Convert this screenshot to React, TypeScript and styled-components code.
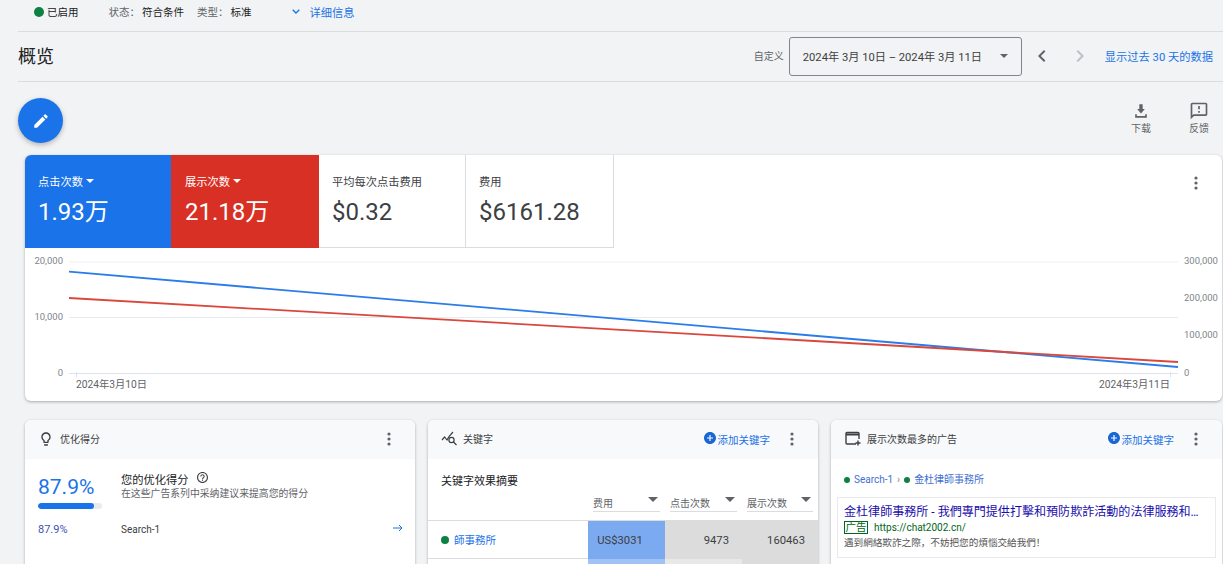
import React, { FC } from "react";
import styled, { createGlobalStyle } from "styled-components";

const GlobalStyle = createGlobalStyle`
  html, body {
    margin: 0;
    padding: 0;
    height: 564px;
    overflow: hidden;
    background: #f1f3f4;
    font-family: Roboto, "Noto Sans CJK SC", sans-serif;
    color: #3c4043;
  }
  * { box-sizing: border-box; }
`;

const Page = styled.div`
  width: 1223px;
  height: 564px;
  overflow: hidden;
`;

const StatusBar = styled.div`
  display: flex;
  align-items: center;
  height: 32px;
  margin-left: 18px;
  padding: 0 0 8px 16px;
  border-bottom: 1px solid #dadce0;
  font-size: 10.5px;
`;

const Dot = styled.span<{ $size?: number }>`
  flex: none;
  width: ${(p) => p.$size ?? 10}px;
  height: ${(p) => p.$size ?? 10}px;
  border-radius: 50%;
  background: #0d8043;
`;

const StatusItem = styled.span<{ $gap: number }>`
  margin-left: ${(p) => p.$gap}px;
  color: #202124;
  white-space: nowrap;
`;

const StatusLabel = styled.span`
  color: #5f6368;
  margin-right: 2px;
`;

const DetailsLink = styled.a`
  display: flex;
  align-items: center;
  gap: 10px;
  margin-left: 40px;
  color: #1a73e8;
  font-size: 11.25px;
`;

const OverviewRow = styled.div`
  display: flex;
  align-items: center;
  height: 50px;
  margin-left: 18px;
  border-bottom: 1px solid #dadce0;
`;

const Title = styled.h1`
  margin: -4px auto 0 0;
  font-size: 18px;
  font-weight: 400;
  color: #202124;
`;

const CustomLabel = styled.span`
  font-size: 10px;
  color: #5f6368;
  margin-right: 5px;
  margin-top: -3px;
`;

const DateBox = styled.div`
  display: flex;
  align-items: center;
  justify-content: space-between;
  width: 233px;
  height: 39px;
  padding: 0 13px 0 13px;
  border: 1px solid #80868b;
  border-radius: 3px;
  font-size: 11.2px;
  color: #3c4043;
  margin-top: -1px;
`;

const Caret = styled.span<{ $color?: string; $w?: number }>`
  display: inline-block;
  flex: none;
  width: 0;
  height: 0;
  border-left: ${(p) => p.$w ?? 4}px solid transparent;
  border-right: ${(p) => p.$w ?? 4}px solid transparent;
  border-top: ${(p) => p.$w ?? 4}px solid ${(p) => p.$color ?? "#5f6368"};
`;

const NavArrows = styled.div`
  display: flex;
  gap: 14px;
  margin: -1px 0 0 8px;
`;

const Last30 = styled.a`
  margin: -1px 10px 0 13px;
  color: #1a73e8;
  font-size: 11.25px;
`;

const Toolbar = styled.div`
  display: flex;
  align-items: flex-start;
  justify-content: space-between;
  height: 73px;
  padding: 16px 0 0 18px;
`;

const Fab = styled.button`
  display: flex;
  align-items: center;
  justify-content: center;
  width: 45px;
  height: 45px;
  border: 0;
  padding: 0;
  border-radius: 50%;
  background: #1a73e8;
  box-shadow: 0 2px 5px rgba(60, 64, 67, 0.35);
`;

const ToolActions = styled.div`
  display: flex;
  gap: 28px;
  margin: 3px 9px 0 0;
`;

const ToolAction = styled.div`
  display: flex;
  flex-direction: column;
  align-items: center;
  width: 30px;
  gap: 1px;
  font-size: 10px;
  color: #5f6368;
  line-height: 14px;
`;

const OverviewCard = styled.section`
  position: relative;
  height: 246px;
  margin: 0 1px 0 25px;
  background: #fff;
  border-radius: 6px;
  box-shadow: 0 1px 3px rgba(60, 64, 67, 0.4);
  overflow: hidden;
`;

const Tiles = styled.div`
  display: flex;
  height: 93px;
`;

const Tile = styled.div<{ $bg?: string; $w: number; $inset?: number }>`
  width: ${(p) => p.$w}px;
  padding: 18px 0 0 ${(p) => p.$inset ?? 13}px;
  background: ${(p) => p.$bg ?? "#fff"};
  color: ${(p) => (p.$bg ? "#fff" : "#3c4043")};
  border-right: ${(p) => (p.$bg ? "0" : "1px solid #dadce0")};
  border-bottom: ${(p) => (p.$bg ? "0" : "1px solid #dadce0")};
`;

const TileLabel = styled.div`
  display: flex;
  align-items: center;
  gap: 3px;
  height: 15px;
  font-size: 11.25px;
`;

const TileValue = styled.div`
  margin-top: 8px;
  font-size: 24px;
  line-height: 32px;
  white-space: nowrap;
`;

const CardMenu = styled.div`
  position: absolute;
  top: 20px;
  right: 24px;
`;

const Chart = styled.svg`
  display: block;
  width: 1197px;
  height: 153px;
`;

const Widgets = styled.div`
  display: grid;
  grid-template-columns: 390px 390px 391px;
  gap: 13px;
  margin: 19px 1px 0 25px;
`;

const Widget = styled.section`
  height: 200px;
  background: #fff;
  border-radius: 6px 6px 0 0;
  box-shadow: 0 1px 3px rgba(60, 64, 67, 0.4);
  overflow: hidden;
`;

const WidgetHeader = styled.header`
  display: flex;
  align-items: center;
  height: 39px;
  padding: 0 24px 2px 13px;
  background: #f8f9fa;
  font-size: 10px;
  color: #5f6368;
`;

const HeaderTitle = styled.span<{ $gap?: number }>`
  margin: 0 auto 0 ${(p) => p.$gap ?? 6}px;
  color: #3c4043;
`;

const AddLink = styled.a`
  display: flex;
  align-items: center;
  gap: 2px;
  margin: 2px 20px 0 0;
  color: #1a73e8;
  font-size: 10.5px;
`;

const ScoreBody = styled.div`
  display: grid;
  grid-template-columns: 83px 1fr 12px;
  padding: 14px 12px 0 13px;
`;

const ScoreValue = styled.div`
  font-size: 21px;
  line-height: 28px;
  color: #1a73e8;
`;

const ScoreTrack = styled.div`
  width: 64px;
  height: 6px;
  margin-top: 2px;
  border-radius: 3px;
  background: #e8eaed;
  overflow: hidden;
`;

const ScoreFill = styled.div`
  height: 100%;
  border-radius: 3px;
  background: #1a73e8;
`;

const ScoreTitle = styled.div`
  display: flex;
  align-items: center;
  gap: 8px;
  height: 14px;
  margin: 1px 0 -1px;
  font-size: 11.25px;
  line-height: 14px;
  color: #202124;
`;

const HelpIcon = styled.svg`
  margin-top: -7px;
`;

const ScoreHint = styled.div`
  font-size: 9.85px;
  line-height: 13px;
  color: #5f6368;
  white-space: nowrap;
`;

const ScoreRow = styled.div`
  display: grid;
  grid-template-columns: 83px 1fr 12px;
  align-items: center;
  margin-top: 14px;
  padding: 0 12px 0 13px;
  font-size: 10px;
  color: #3c4043;
`;

const ScorePercent = styled.span`
  color: #3f51b5;
  font-size: 11px;
`;

const RowArrow = styled.svg`
  margin: -3px 0 0 2px;
`;

const TableTitle = styled.div`
  padding: 15px 0 0 13px;
  font-size: 11px;
  line-height: 15px;
  color: #202124;
`;

const HeadRow = styled.div`
  display: grid;
  grid-template-columns: 160px 77px 77px 76px;
  height: 32px;
  padding-top: 8px;
  border-bottom: 1px solid #dadce0;
`;

const HeadCell = styled.div`
  display: flex;
  justify-content: space-between;
  align-items: flex-start;
  height: 14px;
  margin-left: 5px;
  margin-right: 5px;
  padding-right: 2px;
  box-sizing: content-box;
  border-bottom: 1px solid #dadce0;
  font-size: 10px;
  line-height: 14px;
  color: #5f6368;
`;

const DataRow = styled.div`
  display: grid;
  grid-template-columns: 160px 77px 77px 76px;
  height: 38px;
  border-bottom: 1px solid #dadce0;
`;

const NameCell = styled.div`
  display: flex;
  align-items: center;
  gap: 5px;
  padding-left: 13px;
  font-size: 10.5px;
  color: #1a73e8;
`;

const MetricCell = styled.div<{ $bg: string; $align?: string }>`
  display: flex;
  align-items: center;
  justify-content: ${(p) => p.$align ?? "flex-end"};
  padding-right: 13px;
  margin-bottom: -1px;
  background: ${(p) => p.$bg};
  font-size: 11.25px;
  color: #3c4043;
`;

const AdCrumbs = styled.div`
  display: flex;
  align-items: center;
  gap: 4px;
  padding: 14px 0 0 13px;
  font-size: 10px;
  line-height: 14px;
  color: #3f6fd1;
`;

const CrumbSep = styled.span`
  color: #80868b;
`;

const AdPreview = styled.div`
  margin: 10px 6px 0 6px;
  height: 61px;
  padding: 6px 6px;
  border: 1px solid #e8eaed;
`;

const AdHeadline = styled.div`
  font-size: 12.05px;
  line-height: 16px;
  color: #1a0dab;
  white-space: nowrap;
`;

const AdUrlRow = styled.div`
  display: flex;
  align-items: center;
  gap: 6px;
  margin-top: 1px;
  font-size: 10px;
  line-height: 12px;
  color: #006621;
`;

const AdBadge = styled.span`
  width: 24px;
  height: 13px;
  border: 1px solid #006621;
  font-size: 10.5px;
  line-height: 11px;
  text-align: center;
`;

const AdText = styled.div`
  margin-top: 2px;
  font-size: 9.6px;
  line-height: 13px;
  color: #545454;
`;

const MoreIcon: FC = () => (
  <svg width="4" height="14" viewBox="0 0 4 14">
    <circle cx="2" cy="2" r="1.6" fill="#5f6368" />
    <circle cx="2" cy="7" r="1.6" fill="#5f6368" />
    <circle cx="2" cy="12" r="1.6" fill="#5f6368" />
  </svg>
);

const AddCircle: FC = () => (
  <svg width="12" height="12" viewBox="2 2 20 20" fill="#1967d2" style={{ marginTop: -3 }}>
    <path d="M12 2C6.48 2 2 6.48 2 12s4.48 10 10 10 10-4.48 10-10S17.52 2 12 2zm5 11h-4v4h-2v-4H7v-2h4V7h2v4h4v2z" />
  </svg>
);

const Chevron: FC<{ flip?: boolean; color: string }> = ({ flip, color }) => (
  <svg width="24" height="24" viewBox="0 0 24 24" fill={color} style={flip ? { transform: "scaleX(-1)" } : undefined}>
    <path d="M15.41 7.41L14 6l-6 6 6 6 1.41-1.41L10.83 12z" />
  </svg>
);

const axisFont = { fontSize: 9.5, fill: "#80868b" };

const OverviewChart: FC = () => (
  <Chart viewBox="25 248 1197 153">
    <line x1="69" x2="1178" y1="262" y2="262" stroke="#eef0f6" />
    <line x1="69" x2="1178" y1="317.5" y2="317.5" stroke="#e8eaf2" />
    <line x1="69" x2="1178" y1="373.5" y2="373.5" stroke="#dfe3ee" />
    <line x1="76.5" x2="76.5" y1="372" y2="377" stroke="#dfe3ee" />
    <line x1="1170.5" x2="1170.5" y1="372" y2="377" stroke="#dfe3ee" />
    <line x1="69" y1="271.7" x2="1178" y2="367" stroke="#2a7de9" strokeWidth="1.8" />
    <line x1="69" y1="298" x2="1178" y2="362" stroke="#d9483d" strokeWidth="1.8" />
    <g {...axisFont} textAnchor="end">
      <text x="63" y="264">20,000</text>
      <text x="63" y="320">10,000</text>
      <text x="63" y="376">0</text>
    </g>
    <g {...axisFont}>
      <text x="1184" y="264">300,000</text>
      <text x="1184" y="301">200,000</text>
      <text x="1184" y="338">100,000</text>
      <text x="1184" y="376">0</text>
    </g>
    <g fontSize="10.25" fill="#5f6368">
      <text x="76" y="388">2024年3月10日</text>
      <text x="1170" y="388" textAnchor="end">2024年3月11日</text>
    </g>
  </Chart>
);

export default function App() {
  return (
    <Page>
      <GlobalStyle />
      <StatusBar>
        <Dot />
        <StatusItem $gap={3}>已启用</StatusItem>
        <StatusItem $gap={30}>
          <StatusLabel>状态：</StatusLabel>符合条件
        </StatusItem>
        <StatusItem $gap={13}>
          <StatusLabel>类型：</StatusLabel>标准
        </StatusItem>
        <DetailsLink>
          <svg width="8" height="5" viewBox="0 0 8 5" fill="none" stroke="#1a73e8" strokeWidth="1.3">
            <path d="M.7.7 4 4l3.3-3.3" />
          </svg>
          详细信息
        </DetailsLink>
      </StatusBar>

      <OverviewRow>
        <Title>概览</Title>
        <CustomLabel>自定义</CustomLabel>
        <DateBox>
          2024年 3月 10日 – 2024年 3月 11日
          <Caret />
        </DateBox>
        <NavArrows>
          <Chevron color="#5f6368" />
          <Chevron flip color="#bdc1c6" />
        </NavArrows>
        <Last30>显示过去 30 天的数据</Last30>
      </OverviewRow>

      <Toolbar>
        <Fab>
          <svg width="18" height="18" viewBox="0 0 24 24" fill="#fff">
            <path d="M3 17.25V21h3.75L17.81 9.94l-3.75-3.75L3 17.25zM20.71 7.04c.39-.39.39-1.02 0-1.41l-2.34-2.34c-.39-.39-1.02-.39-1.41 0l-1.83 1.83 3.75 3.75 1.83-1.83z" />
          </svg>
        </Fab>
        <ToolActions>
          <ToolAction>
            <svg width="20" height="20" viewBox="0 0 24 24" fill="#5f6368">
              <path d="M16.6 9.6H14V4h-4v5.6H7.4L12 15zM5 16v4h14v-4h-2v2H7v-2z" />
            </svg>
            下载
          </ToolAction>
          <ToolAction>
            <svg width="20" height="20" viewBox="0 0 24 24" fill="#5f6368">
              <path d="M20 2H4c-1.1 0-1.99.9-1.99 2L2 22l4-4h14c1.1 0 2-.9 2-2V4c0-1.1-.9-2-2-2zm0 14H5.17L4 17.17V4h16v12zm-9-4h2v2h-2zm0-6h2v4h-2z" />
            </svg>
            反馈
          </ToolAction>
        </ToolActions>
      </Toolbar>

      <OverviewCard>
        <Tiles>
          <Tile $bg="#1a73e8" $w={146}>
            <TileLabel>
              点击次数 <Caret $color="#fff" />
            </TileLabel>
            <TileValue>1.93万</TileValue>
          </Tile>
          <Tile $bg="#d93025" $w={148} $inset={14}>
            <TileLabel>
              展示次数 <Caret $color="#fff" />
            </TileLabel>
            <TileValue>21.18万</TileValue>
          </Tile>
          <Tile $w={147}>
            <TileLabel>平均每次点击费用</TileLabel>
            <TileValue>$0.32</TileValue>
          </Tile>
          <Tile $w={148}>
            <TileLabel>费用</TileLabel>
            <TileValue>$6161.28</TileValue>
          </Tile>
        </Tiles>
        <CardMenu>
          <MoreIcon />
        </CardMenu>
        <OverviewChart />
      </OverviewCard>

      <Widgets>
        <Widget>
          <WidgetHeader>
            <svg width="16" height="16" viewBox="0 0 24 24" fill="#3c4043">
              <path d="M9 21c0 .55.45 1 1 1h4c.55 0 1-.45 1-1v-1H9v1zm3-19C8.14 2 5 5.14 5 9c0 2.38 1.19 4.47 3 5.74V17c0 .55.45 1 1 1h6c.55 0 1-.45 1-1v-2.26c1.81-1.27 3-3.36 3-5.74 0-3.86-3.14-7-7-7zm2.85 11.1l-.85.6V16h-4v-2.3l-.85-.6C7.8 12.16 7 10.63 7 9c0-2.76 2.24-5 5-5s5 2.24 5 5c0 1.63-.8 3.16-2.15 4.1z" />
            </svg>
            <HeaderTitle>优化得分</HeaderTitle>
            <MoreIcon />
          </WidgetHeader>
          <ScoreBody>
            <div>
              <ScoreValue>87.9%</ScoreValue>
              <ScoreTrack>
                <ScoreFill style={{ width: "87.9%" }} />
              </ScoreTrack>
            </div>
            <div>
              <ScoreTitle>
                您的优化得分
                <HelpIcon width="11" height="11" viewBox="2 2 20 20" fill="#3c4043">
                  <path d="M11 18h2v-2h-2v2zm1-16C6.48 2 2 6.48 2 12s4.48 10 10 10 10-4.48 10-10S17.52 2 12 2zm0 18c-4.41 0-8-3.59-8-8s3.59-8 8-8 8 3.59 8 8-3.59 8-8 8zm0-14c-2.21 0-4 1.79-4 4h2c0-1.1.9-2 2-2s2 .9 2 2c0 2-3 1.75-3 5h2c0-2.25 3-2.5 3-5 0-2.21-1.79-4-4-4z" />
                </HelpIcon>
              </ScoreTitle>
              <ScoreHint>在这些广告系列中采纳建议来提高您的得分</ScoreHint>
            </div>
          </ScoreBody>
          <ScoreRow>
            <ScorePercent>87.9%</ScorePercent>
            <span>Search-1</span>
            <RowArrow width="10" height="8" viewBox="0 0 10 8" fill="none" stroke="#1a73e8" strokeWidth="1">
              <path d="M0 4h9M6 1l3 3-3 3" />
            </RowArrow>
          </ScoreRow>
        </Widget>

        <Widget>
          <WidgetHeader>
            <svg width="18" height="15" viewBox="0 0 18 15" fill="none" stroke="#3c4043" strokeWidth="1.2">
              <path d="M1 9l2.6-3 2.4 3 2-3.5L12 1" />
              <circle cx="10.5" cy="9" r="2.6" />
              <path d="M12.5 11l3 3" />
            </svg>
            <HeaderTitle $gap={4}>关键字</HeaderTitle>
            <AddLink>
              <AddCircle />
              添加关键字
            </AddLink>
            <MoreIcon />
          </WidgetHeader>
          <TableTitle>关键字效果摘要</TableTitle>
          <HeadRow>
            <span />
            <HeadCell>
              费用 <Caret $w={5} />
            </HeadCell>
            <HeadCell>
              点击次数 <Caret $w={5} />
            </HeadCell>
            <HeadCell>
              展示次数 <Caret $w={5} />
            </HeadCell>
          </HeadRow>
          <DataRow>
            <NameCell>
              <Dot $size={8} />
              師事務所
            </NameCell>
            <MetricCell $bg="#7baaf0" $align="center">US$3031</MetricCell>
            <MetricCell $bg="#dcdcdc">9473</MetricCell>
            <MetricCell $bg="#dcdcdc">160463</MetricCell>
          </DataRow>
          <DataRow>
            <NameCell />
            <MetricCell $bg="#a0c2f4" />
            <MetricCell $bg="#e8e8e8" />
            <MetricCell $bg="#dcdcdc" />
          </DataRow>
        </Widget>

        <Widget>
          <WidgetHeader>
            <svg width="16" height="15" viewBox="0 0 16 15" fill="none" stroke="#3c4043" strokeWidth="1.4" style={{ marginLeft: 1 }}>
              <path d="M11 13H2a1 1 0 0 1-1-1V2.5a1 1 0 0 1 1-1h11a1 1 0 0 1 1 1V8" />
              <path d="M1 3.5h13" strokeWidth="2" />
              <path d="M13 9.5v5M10.5 12h5" />
            </svg>
            <HeaderTitle>展示次数最多的广告</HeaderTitle>
            <AddLink>
              <AddCircle />
              添加关键字
            </AddLink>
            <MoreIcon />
          </WidgetHeader>
          <AdCrumbs>
            <Dot $size={6} />
            Search-1
            <CrumbSep>›</CrumbSep>
            <Dot $size={6} />
            金杜律師事務所
          </AdCrumbs>
          <AdPreview>
            <AdHeadline>金杜律師事務所 - 我們專門提供打擊和預防欺詐活動的法律服務和…</AdHeadline>
            <AdUrlRow>
              <AdBadge>广告</AdBadge>
              https://chat2002.cn/
            </AdUrlRow>
            <AdText>遇到網絡欺詐之際，不妨把您的煩惱交給我們！</AdText>
          </AdPreview>
        </Widget>
      </Widgets>
    </Page>
  );
}
